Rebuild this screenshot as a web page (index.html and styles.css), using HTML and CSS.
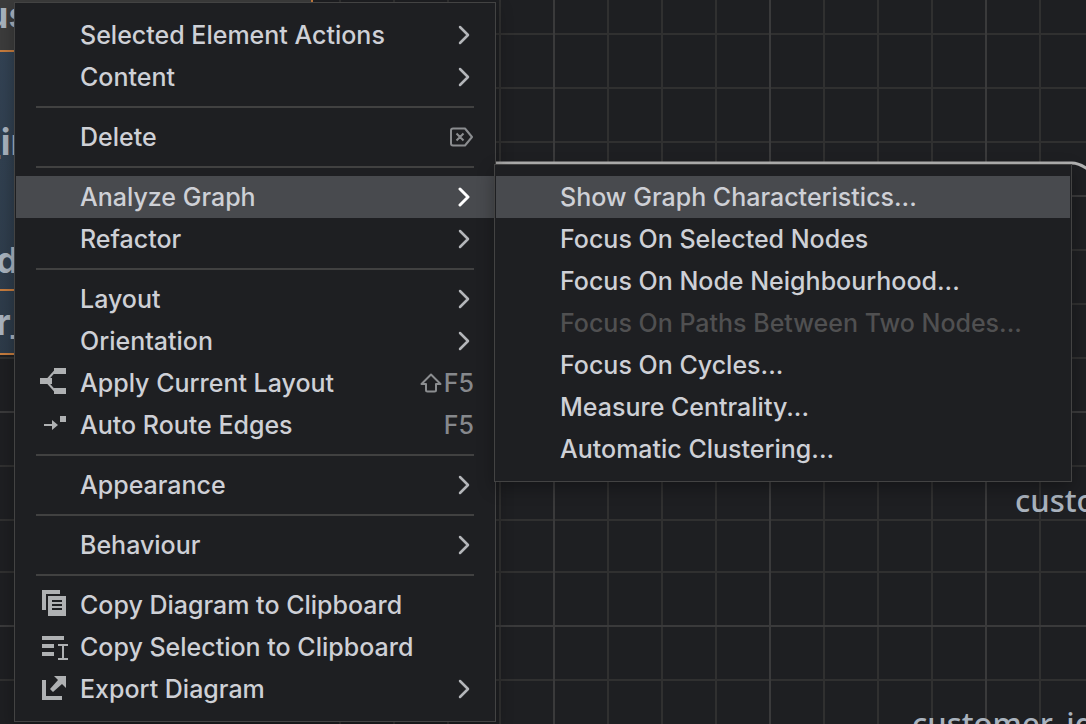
FILE: index.html
```html
<!DOCTYPE html>
<html lang="en">
<head>
    <meta charset="utf-8">
    <title>Diagram</title>
    <link rel="stylesheet" href="styles.css">
</head>
<body>
    <!-- Diagram canvas -->
    <svg class="canvas">
        <defs>
            <linearGradient id="node-fill" x1="0" y1="0" x2="1" y2="1">
                <stop offset="0" stop-color="#334354"/>
                <stop offset="1" stop-color="#28333f"/>
            </linearGradient>
        </defs>
        <g class="grid">
            <path d="M340 0v724M394 0v724M448 0v724M500 0v724M608 0v724M662 0v724M716 0v724M824 0v724M878 0v724M932 0v724M1040 0v724"/>
            <path d="M0 34h1086M0 88h1086M0 142h1086M0 250h1086M0 304h1086M0 358h1086M0 466h1086M0 520h1086M0 572h1086M0 680h1086"/>
            <path class="major" d="M554 0v724M770 0v724M986 0v724M0 196h1086M0 412h1086M0 626h1086"/>
        </g>
        <rect class="node-header" x="-10" y="-10" width="322" height="62"/>
        <rect x="-10" y="51" width="322" height="303" fill="url(#node-fill)"/>
        <path class="node-line" d="M0 51h312M0 290h312M0 354h313M312 0v354"/>
        <text class="node-text" x="-14" y="28">ust</text>
        <text class="node-text" x="-17" y="155">_in</text>
        <text class="node-text" x="-4" y="273">d</text>
        <text class="node-text" x="-4" y="335">r_</text>
        <path class="edge" d="M490 163H1072Q1080 163 1092 172"/>
        <text class="edge-text" x="1015" y="512">customer</text>
        <text class="edge-text" x="912" y="735">customer_id</text>
    </svg>

    <div class="menu context-menu" role="menu">
        <button class="item"><span class="icon"></span><span class="label">Selected Element Actions</span><svg class="chevron" viewBox="0 0 16 20"><path d="M2 2l8 8-8 8"/></svg></button>
        <button class="item"><span class="icon"></span><span class="label">Content</span><svg class="chevron" viewBox="0 0 16 20"><path d="M2 2l8 8-8 8"/></svg></button>
        <hr>
        <button class="item"><span class="icon"></span><span class="label">Delete</span>
            <svg class="key" width="24" height="20" viewBox="0 0 24 20"><path d="M3 1.5h12l7 8.5-7 8.500H3q-2 0-2-2v-13q0-2 2-2zM6.500 6.500l7 7M13.500 6.500l-7 7"/></svg>
        </button>
        <hr>
        <div class="submenu-holder">
            <button class="item active" aria-haspopup="true" aria-expanded="true"><span class="icon"></span><span class="label">Analyze Graph</span><svg class="chevron" viewBox="0 0 16 20"><path d="M2 2l8 8-8 8"/></svg></button>
            <div class="menu submenu" role="menu">
                <button class="item active"><span class="icon"></span><span class="label">Show Graph Characteristics...</span></button>
                <button class="item"><span class="icon"></span><span class="label">Focus On Selected Nodes</span></button>
                <button class="item"><span class="icon"></span><span class="label">Focus On Node Neighbourhood...</span></button>
                <button class="item" disabled><span class="icon"></span><span class="label">Focus On Paths Between Two Nodes...</span></button>
                <button class="item"><span class="icon"></span><span class="label">Focus On Cycles...</span></button>
                <button class="item"><span class="icon"></span><span class="label">Measure Centrality...</span></button>
                <button class="item"><span class="icon"></span><span class="label">Automatic Clustering...</span></button>
            </div>
        </div>
        <button class="item"><span class="icon"></span><span class="label">Refactor</span><svg class="chevron" viewBox="0 0 16 20"><path d="M2 2l8 8-8 8"/></svg></button>
        <hr>
        <button class="item"><span class="icon"></span><span class="label">Layout</span><svg class="chevron" viewBox="0 0 16 20"><path d="M2 2l8 8-8 8"/></svg></button>
        <button class="item"><span class="icon"></span><span class="label">Orientation</span><svg class="chevron" viewBox="0 0 16 20"><path d="M2 2l8 8-8 8"/></svg></button>
        <button class="item">
            <svg class="icon" viewBox="0 0 32 32"><path d="M16 1h12v6H16zM2 11h12v6H2zM16 21h12v6H16z"/><path class="stroke" d="M17 4l-8 9M9 15l8 9"/></svg>
            <span class="label">Apply Current Layout</span>
            <span class="shortcut"><svg class="key" width="24" height="20" viewBox="0 0 24 20"><path d="M11 1.500l9.500 9.500h-4.500v6q0 1.500-1.500 1.500h-7q-1.500 0-1.500-1.500v-6H1.500z"/></svg>F5</span>
        </button>
        <button class="item">
            <svg class="icon" viewBox="0 0 32 32"><path d="M22 7h6v6h-6zM14 11l6 5-6 5z"/><path class="stroke" d="M6 16h9"/></svg>
            <span class="label">Auto Route Edges</span>
            <span class="shortcut">F5</span>
        </button>
        <hr>
        <button class="item"><span class="icon"></span><span class="label">Appearance</span><svg class="chevron" viewBox="0 0 16 20"><path d="M2 2l8 8-8 8"/></svg></button>
        <hr>
        <button class="item"><span class="icon"></span><span class="label">Behaviour</span><svg class="chevron" viewBox="0 0 16 20"><path d="M2 2l8 8-8 8"/></svg></button>
        <hr>
        <button class="item">
            <svg class="icon" viewBox="0 0 32 32"><path d="M4 1h18v4H8v16H4z"/><path fill-rule="evenodd" d="M10 7h18v20H10zM14 11v2h10v-2zM14 15v2h10v-2zM14 19v2h10v-2z"/></svg>
            <span class="label">Copy Diagram to Clipboard</span>
        </button>
        <button class="item">
            <svg class="icon" viewBox="0 0 32 32"><path d="M4 5h22v4H4zM4 13h12v4H4zM4 21h12v4H4z"/><path class="stroke" d="M20 14h10M25 14v14M20 28h10"/></svg>
            <span class="label">Copy Selection to Clipboard</span>
        </button>
        <button class="item">
            <svg class="icon" viewBox="0 0 32 32"><path d="M4 7h4v16h16v4H4zM16 3h12v12l-4-4-9 8-3-3 8-9z"/></svg>
            <span class="label">Export Diagram</span><svg class="chevron" viewBox="0 0 16 20"><path d="M2 2l8 8-8 8"/></svg>
        </button>
    </div>
</body>
</html>
```
FILE: styles.css
```css
body {
    margin: 0;
    min-height: 100vh;
    overflow: hidden;
    background-color: #1e1f22;
    font-family: Inter, sans-serif;
}

/* canvas */
.canvas {
    position: absolute;
    top: 0;
    left: 0;
    width: 100%;
    height: 100%;
}
.grid path {
    stroke: #303030;
    stroke-width: 2;
}
.grid .major {
    stroke: #3a3a3b;
}
.node-header {
    fill: #3c3c3c;
}
.node-line {
    fill: none;
    stroke: #c67c3e;
    stroke-width: 2;
}
.node-text {
    font-size: 36px;
    font-weight: 700;
    fill: #a9b3be;
}
.edge {
    fill: none;
    stroke: #b4b4b4;
    stroke-width: 3;
}
.edge-text {
    font-family: "Noto Sans", sans-serif;
    font-size: 31px;
    font-weight: 500;
    fill: #a9b2bd;
}

/* menus */
.menu {
    position: absolute;
    box-sizing: border-box;
    padding: 11px 1px;
    background-color: #1e1f22;
    border: 1px solid #434343;
    box-shadow: 0 6px 16px rgba(0, 0, 0, 0.3);
}
.context-menu {
    top: 2px;
    left: 14px;
    min-width: 482px;
}
.submenu-holder {
    position: relative;
}
.submenu {
    top: -12px;
    left: 100%;
    min-width: 578px;
}
.item {
    display: flex;
    align-items: center;
    gap: 10px;
    width: 100%;
    height: 42px;
    padding: 0 20px 0 22px;
    border: none;
    background: none;
    color: #ced0d6;
    font-family: inherit;
    font-size: 25px;
    font-weight: 500;
    text-align: left;
    white-space: nowrap;
}
.item.active {
    background-color: #484a4e;
}
.item:disabled {
    color: #505051;
}
.label {
    flex: 1;
}
.icon {
    flex: none;
    width: 32px;
    height: 32px;
    fill: #afb1b3;
}
.icon .stroke {
    fill: none;
    stroke: #afb1b3;
    stroke-width: 2;
}
.chevron {
    width: 16px;
    height: 20px;
    fill: none;
    stroke: #b4b6ba;
    stroke-width: 2.5;
    stroke-linecap: round;
    stroke-linejoin: round;
}
.active .chevron {
    stroke: #ffffff;
    stroke-width: 3;
}
.shortcut {
    display: flex;
    align-items: center;
    color: #86888c;
}
.key {
    fill: none;
    stroke: #8b8d90;
    stroke-width: 2;
    stroke-linejoin: round;
}
hr {
    height: 2px;
    margin: 8px 20px;
    border: none;
    background-color: #414141;
}
```
